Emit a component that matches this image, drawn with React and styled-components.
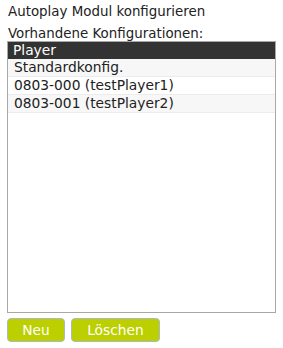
import styled, { createGlobalStyle } from "styled-components";

const GlobalStyle = createGlobalStyle`
  body {
    margin: 0;
    background: #fff;
    font-family: "DejaVu Sans", sans-serif;
    font-size: 13.4px;
    color: #222;
  }
`;

const Page = styled.div`
  padding: 4px 7px 0 7px;
  width: 269px;
`;

const Title = styled.div`
  line-height: 16px;
  padding-left: 1px;
`;

const Label = styled.div`
  margin-top: 6px;
  line-height: 15px;
  padding-left: 1px;
`;

const ListBox = styled.div`
  border: 1px solid #a8a8a8;
  height: 270px;
  background: #fff;
  font-size: 13.8px;
`;

const Header = styled.div`
  background: #333;
  color: #fff;
  height: 17px;
  line-height: 17px;
  padding-left: 5px;
`;

const Row = styled.div`
  height: 17px;
  line-height: 17px;
  padding-left: 6px;
  border-bottom: 1px solid #ececec;
  background: ${(p) => (p.$alt ? "#f7f7f7" : "#fff")};
`;

const Buttons = styled.div`
  display: flex;
  gap: 6px;
  margin-top: 5px;
`;

const Button = styled.button`
  font-family: "DejaVu Sans", sans-serif;
  font-size: 13.8px;
  color: #fff;
  background: #bccf00;
  border: 1px solid #aab8c8;
  border-radius: 4px;
  height: 24px;
  width: ${(p) => p.$w}px;
  padding: 0;
`;

const rows = ["Standardkonfig.", "0803-000 (testPlayer1)", "0803-001 (testPlayer2)"];

export default function App() {
  return (
    <>
      <GlobalStyle />
      <Page>
        <Title>Autoplay Modul konfigurieren</Title>
        <Label>Vorhandene Konfigurationen:</Label>
        <ListBox>
          <Header>Player</Header>
          {rows.map((r, i) => (
            <Row key={r} $alt={i % 2 === 0}>
              {r}
            </Row>
          ))}
        </ListBox>
        <Buttons>
          <Button $w={58}>Neu</Button>
          <Button $w={89}>Löschen</Button>
        </Buttons>
      </Page>
    </>
  );
}
